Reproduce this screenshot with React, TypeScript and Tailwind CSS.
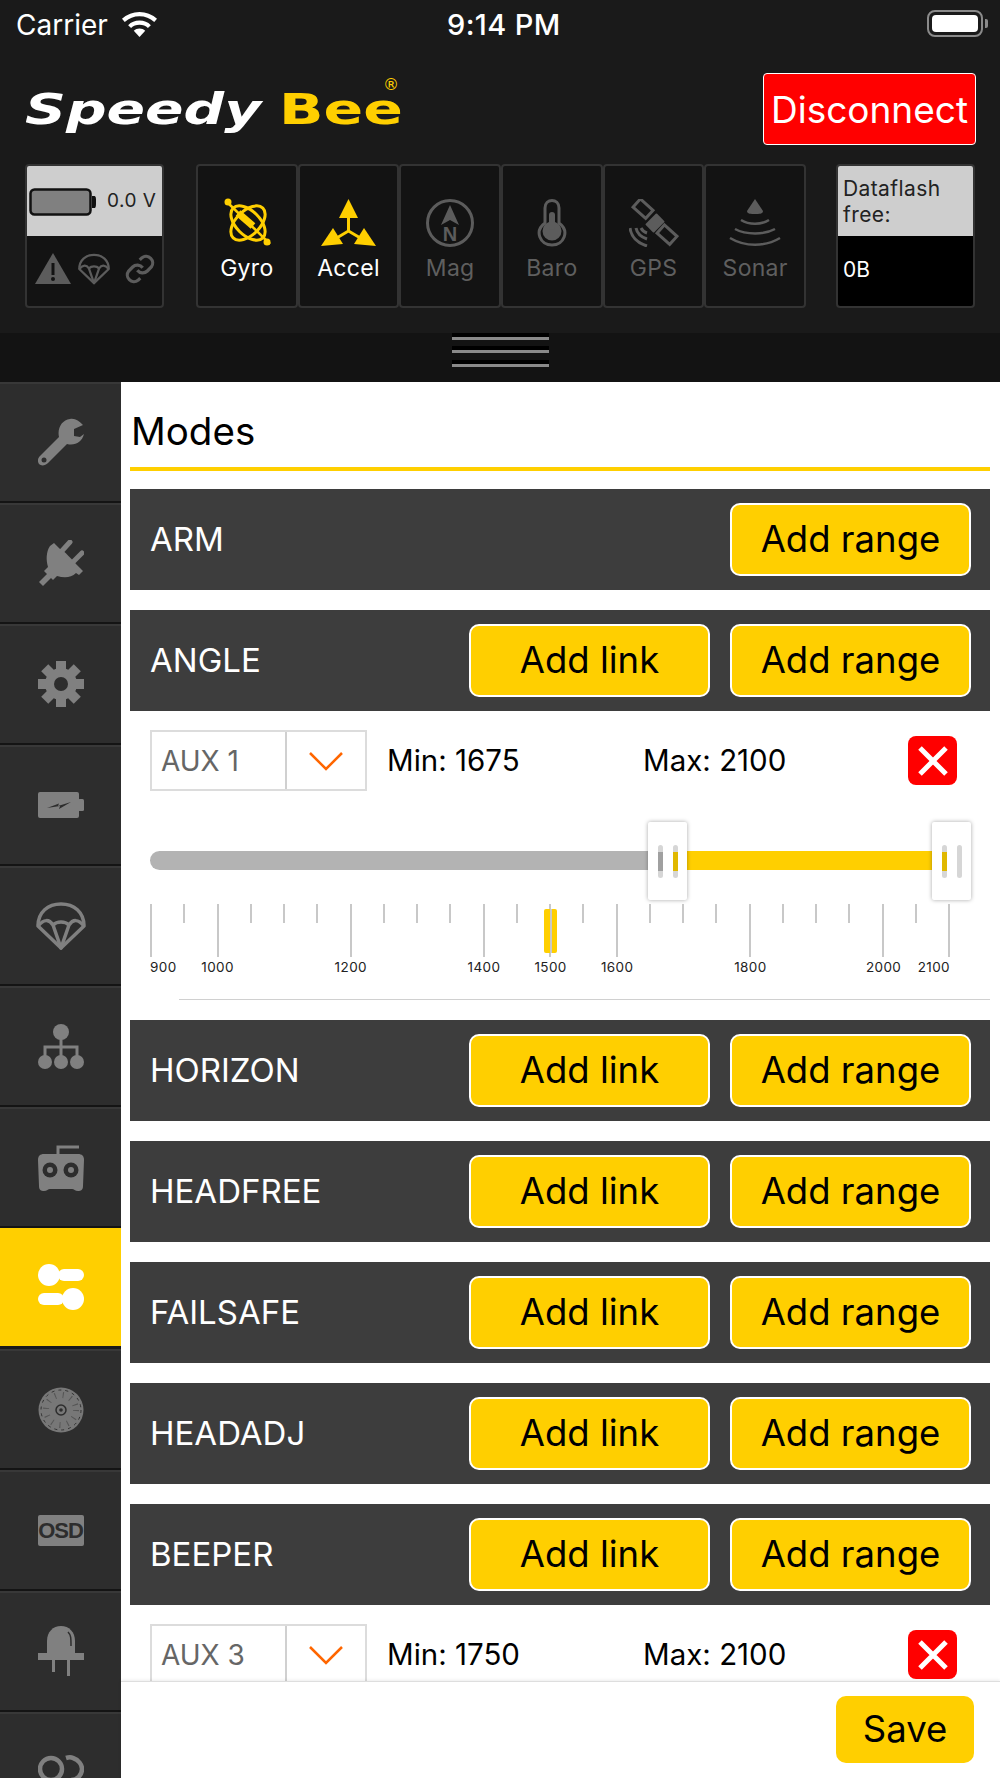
import React from 'react';

const GRAY = '#808080';
const DIM = '#5c5c5c';
const YELLOW = '#ffcf00';

// ===== Sidebar icons =====
const WrenchIcon = () => (
    <svg width="46" height="48" viewBox="0 0 46 48">
        <path d="M45 7 L36 11 L36 18 L42 19 L46 16 C44 24 37 28 29 26 L10 45 C7 48 3 48 1 46 C-1 43 0 40 2 38 L21 19 C19 10 24 2 32 1 C37 0 41 3 45 7 Z" fill={GRAY} />
        <circle cx="6" cy="42" r="2.5" fill="#2d2d2d" />
    </svg>
);

const PlugIcon = () => (
    <svg width="46" height="46" viewBox="0 0 46 46">
        <path d="M12 6 L16 3 L22 9 C27 11 33 19 42 28 L45 31 L41 35 L38 33 C33 38 26 38 19 36 L15 40 L13 38 L5 46 L1 42 L9 34 L6 31 L10 27 C8 20 8 12 12 6 Z" fill={GRAY} />
        <path d="M22 13 L32 2 M33 24 L44 13" stroke={GRAY} strokeWidth="5" strokeLinecap="round" />
    </svg>
);

const GearIcon = () => (
    <svg width="46" height="46" viewBox="0 0 46 46">
        <g fill={GRAY}>
            <rect x="18" y="0" width="10" height="46" />
            <rect x="18" y="0" width="10" height="46" transform="rotate(45 23 23)" />
            <rect x="18" y="0" width="10" height="46" transform="rotate(90 23 23)" />
            <rect x="18" y="0" width="10" height="46" transform="rotate(135 23 23)" />
            <circle cx="23" cy="23" r="16" />
        </g>
        <circle cx="23" cy="23" r="7" fill="#2d2d2d" />
    </svg>
);

const BatteryIcon = () => (
    <svg width="46" height="26" viewBox="0 0 46 26">
        <rect x="0" y="0" width="41" height="26" rx="2" fill={GRAY} />
        <rect x="40" y="7" width="6" height="12" rx="1.5" fill={GRAY} />
        <path d="M9 16 L21 11.5 L20 14 L33 10 L21 17 L22 14 Z" fill="#2d2d2d" />
    </svg>
);

const ParachuteIcon = ({ color = GRAY, size = 50 }: { color?: string; size?: number }) => (
    <svg width={size} height={size} viewBox="0 0 50 50">
        <g fill="none" stroke={color} strokeWidth="3.5" strokeLinejoin="round">
            <path d="M2 25 C2 11 12 3 25 3 C38 3 48 11 48 25 L25 47 Z" />
            <path d="M2 25 C8 18 13 18 17 24 L25 47 L33 24 C37 18 42 18 48 25" />
            <path d="M17 24 C21 20 29 20 33 24" />
        </g>
    </svg>
);

const TreeIcon = () => (
    <svg width="46" height="46" viewBox="0 0 46 46">
        <g fill={GRAY}>
            <circle cx="23" cy="8" r="8" />
            <circle cx="7" cy="38" r="7" />
            <circle cx="23" cy="38" r="7" />
            <circle cx="39" cy="38" r="7" />
        </g>
        <path d="M23 14 V34 M7 34 V23 H39 V34" fill="none" stroke={GRAY} strokeWidth="3" />
    </svg>
);

const RadioIcon = () => (
    <svg width="46" height="48" viewBox="0 0 46 48">
        <path d="M20 11 V3 H41" fill="none" stroke={GRAY} strokeWidth="3" />
        <path d="M6 10 H40 C44 10 46 12 46 16 L45 42 C45 46 43 47 40 47 C37 47 36 45 34 45 H12 C10 45 9 47 6 47 C3 47 1 46 1 42 L0 16 C0 12 2 10 6 10 Z" fill={GRAY} />
        <circle cx="12" cy="26" r="7.5" fill="#2d2d2d" />
        <circle cx="12" cy="26" r="3" fill={GRAY} />
        <circle cx="33" cy="26" r="7.5" fill="#2d2d2d" />
        <circle cx="33" cy="26" r="3" fill={GRAY} />
    </svg>
);

const TogglesIcon = () => (
    <svg width="46" height="46" viewBox="0 0 46 46">
        <g fill="#fff">
            <rect x="20" y="5" width="26" height="12" rx="6" />
            <circle cx="11" cy="11" r="11" />
            <rect x="0" y="29" width="26" height="12" rx="6" />
            <circle cx="35" cy="35" r="11" />
        </g>
    </svg>
);

const WheelIcon = () => (
    <svg width="46" height="46" viewBox="0 0 46 46">
        <circle cx="23" cy="23" r="22.5" fill="#777" />
        <circle cx="23" cy="23" r="20" fill="none" stroke="#333" strokeWidth="1" strokeDasharray="3 4" />
        <circle cx="23" cy="23" r="15" fill="none" stroke="#555" strokeWidth="6" strokeDasharray="1 7" />
        <circle cx="23" cy="23" r="5" fill="none" stroke="#2d2d2d" strokeWidth="1.5" />
        <circle cx="23" cy="23" r="1.8" fill="#2d2d2d" />
    </svg>
);

const LedIcon = () => (
    <svg width="46" height="50" viewBox="0 0 46 50">
        <path d="M9 27 V15 C9 6 15 0 23 0 C31 0 37 6 37 15 V27 Z" fill={GRAY} />
        <path d="M30 6 C33 9 33 12 33 20" fill="none" stroke="#2d2d2d" strokeWidth="1.5" />
        <rect x="0" y="27" width="46" height="7" fill={GRAY} />
        <rect x="14" y="34" width="3" height="12" fill={GRAY} />
        <rect x="29" y="34" width="3" height="16" fill={GRAY} />
    </svg>
);

const LoopIcon = () => (
    <svg width="46" height="50" viewBox="0 0 46 50">
        <circle cx="13" cy="22" r="11" fill="none" stroke={GRAY} strokeWidth="4.5" />
        <path d="M28 11 C31 10 33 10 35 11 C41 13 44 18 44 22 C44 28 39 33 33 33" fill="none" stroke={GRAY} strokeWidth="4.5" />
    </svg>
);

const sideItems = [
    <WrenchIcon />,
    <PlugIcon />,
    <GearIcon />,
    <BatteryIcon />,
    <ParachuteIcon />,
    <TreeIcon />,
    <RadioIcon />,
    <TogglesIcon />,
    <WheelIcon />,
    <div className="w-[46px] h-[31px] bg-[#808080] rounded-[2px] flex items-center justify-center text-[22px] font-bold text-[#2d2d2d] font-['Liberation_Sans',sans-serif] tracking-[-1px]">OSD</div>,
    <LedIcon />,
    <LoopIcon />,
];

// ===== Sensor icons =====
const GyroIcon = () => (
    <svg width="50" height="50" viewBox="0 0 50 50" className="ml-[4px]">
        <g fill="none" stroke={YELLOW} strokeWidth="3">
            <ellipse cx="24" cy="25" rx="21" ry="12" transform="rotate(45 24 25)" />
            <ellipse cx="24" cy="25" rx="21" ry="12" transform="rotate(-45 24 25)" />
            <path d="M3 4 L46 46" strokeWidth="2.5" />
            <path d="M14 15 L29 28" strokeWidth="7" />
        </g>
        <circle cx="4" cy="4" r="3.5" fill={YELLOW} />
        <circle cx="43" cy="44" r="3.5" fill={YELLOW} />
    </svg>
);

const AccelIcon = () => (
    <svg width="56" height="48" viewBox="0 0 56 48">
        <g fill={YELLOW}>
            <path d="M27.5 0 L37 19 L18 19 Z" />
            <path d="M0 47 L12 29 L22 45 Z" />
            <path d="M55 47 L43 29 L33 45 Z" />
        </g>
        <path d="M27.5 18 V32 L14 40 M27.5 32 L41 40" fill="none" stroke={YELLOW} strokeWidth="3" />
    </svg>
);

const MagIcon = () => (
    <svg width="48" height="48" viewBox="0 0 48 48">
        <circle cx="24" cy="24" r="22.5" fill="none" stroke={DIM} strokeWidth="3" />
        <path d="M24 6 L33 26 L24 21 L15 26 Z" fill={DIM} />
        <text x="24" y="42" textAnchor="middle" fontSize="20" fontWeight="700" fill={DIM} fontFamily="Liberation Sans, sans-serif">N</text>
    </svg>
);

const BaroIcon = () => (
    <svg width="32" height="48" viewBox="0 0 32 48">
        <path d="M9 24 V9 C9 -1 23 -1 23 9 V24 C34 32 28 46 16 46 C4 46 -2 32 9 24 Z" fill="none" stroke={DIM} strokeWidth="3" />
        <circle cx="16" cy="32" r="9.5" fill={DIM} />
        <rect x="13" y="13" width="6" height="18" rx="3" fill={DIM} />
    </svg>
);

const GpsIcon = () => (
    <svg width="50" height="48" viewBox="0 0 50 48">
        <g fill="none" stroke={DIM} strokeWidth="3">
            <rect x="6" y="4" width="17" height="11" transform="rotate(42 14 9)" />
            <rect x="30" y="30" width="17" height="11" transform="rotate(42 38 35)" />
            <path d="M1 29 C2 37 8 44 18 47" />
            <path d="M7 29 C8 34 12 38 18 40" />
            <path d="M12 29 C13 31 15 33 18 34" />
        </g>
        <rect x="18" y="18" width="16" height="12" fill={DIM} transform="rotate(-45 26 24)" rx="1" />
    </svg>
);

const SonarIcon = () => (
    <svg width="52" height="48" viewBox="0 0 52 48">
        <path d="M26 0 L34 12 C34 15 30 15 26 15 C22 15 18 15 18 12 Z" fill={DIM} />
        <g fill="none" stroke={DIM} strokeWidth="2.5">
            <path d="M12 21 C20 26 32 26 40 21" />
            <path d="M6 30 C17 36 35 36 46 30" />
            <path d="M1 39 C16 48 36 48 51 39" />
        </g>
    </svg>
);

const sensors = [
    { label: 'Gyro', icon: <GyroIcon />, on: true },
    { label: 'Accel', icon: <AccelIcon />, on: true },
    { label: 'Mag', icon: <MagIcon />, on: false },
    { label: 'Baro', icon: <BaroIcon />, on: false },
    { label: 'GPS', icon: <GpsIcon />, on: false },
    { label: 'Sonar', icon: <SonarIcon />, on: false },
];

// ===== Header =====
const StatusBar = () => (
    <div className="h-[50px] flex items-center relative text-white">
        <span className="ml-[16px] text-[28px]">Carrier</span>
        <svg className="ml-[13px] mb-[3px]" width="37" height="26" viewBox="0 0 35 25">
            <g fill="none" stroke="#fff" strokeWidth="4">
                <path d="M2 9 C11 1 24 1 33 9" />
                <path d="M8 15 C13 10 22 10 27 15" />
            </g>
            <path d="M12 19 C15 16 20 16 23 19 L17.5 25 Z" fill="#fff" />
        </svg>
        <span className="absolute left-[447px] text-[29px] font-medium tracking-[0.4px]">9:14 PM</span>
        <div className="ml-auto mr-[12px] flex items-center mb-[3px]">
            <div className="w-[56px] h-[27px] rounded-[8px] border-2 border-[#8a8a8a] p-[3px]">
                <div className="w-full h-full rounded-[4px] bg-white" />
            </div>
            <div className="w-[3px] h-[9px] bg-[#8a8a8a] rounded-r-[2px] ml-[2px]" />
        </div>
    </div>
);

const Logo = () => (
    <div className="flex items-center h-[97px] ml-[25px] relative font-['DejaVu_Sans',sans-serif] font-bold italic text-[43px] leading-none">
        <span className="text-white inline-block origin-left scale-x-[1.32] w-[254px]">Speedy</span>
        <span className="text-[#ffcf00] inline-block origin-left scale-x-[1.36] not-italic w-[120px]">Bee</span>
        <span className="absolute left-[358px] top-[20px] leading-[8px] text-[#ffcf00] text-[16px] not-italic font-normal">®</span>
    </div>
);

const Header = () => (
    <div className="h-[382px] bg-[#1a1a1a] shrink-0 flex flex-col">
        <StatusBar />
        <div className="flex items-center justify-between pr-[24px] h-[114px] pt-[4px]">
            <Logo />
            <button className="w-[213px] h-[72px] bg-[#ff0000] border border-white rounded-[4px] text-white text-[37px] leading-none">Disconnect</button>
        </div>
        <div className="flex h-[144px] ml-[25px]">
            <div className="w-[139px] border-2 border-[#333] rounded-[4px] bg-[#131313] overflow-hidden flex flex-col">
                <div className="h-[70px] bg-[#cecece] flex items-center pl-[2px] gap-[9px] text-[19px] text-[#222] tracking-[0.5px]">
                    <svg width="69" height="28" viewBox="0 0 69 28" className="mt-[1px]">
                        <rect x="1.5" y="1.5" width="60" height="25" rx="4" fill="#808080" stroke="#111" strokeWidth="2.5" />
                        <path d="M63 8 H65 C67 8 67 10 67 14 C67 18 67 20 65 20 H63 Z" fill="#111" />
                    </svg>
                    <span>0.0 V</span>
                </div>
                <div className="flex-1 flex items-center pl-[8px] gap-[7px] pb-[5px]">
                    <svg width="36" height="32" viewBox="0 0 36 32">
                        <path d="M18 0 L36 31 H0 Z" fill={DIM} />
                        <rect x="16.5" y="10" width="3" height="12" fill="#131313" />
                        <circle cx="18" cy="26" r="2" fill="#131313" />
                    </svg>
                    <ParachuteIcon color={DIM} size={32} />
                    <svg className="ml-[7px]" width="32" height="32" viewBox="0 0 24 24" fill="none" stroke={DIM} strokeWidth="2.4">
                        <path d="M10 13a5 5 0 0 0 7.5.5l3-3a5 5 0 0 0-7-7l-1.7 1.7" />
                        <path d="M14 11a5 5 0 0 0-7.5-.5l-3 3a5 5 0 0 0 7 7l1.7-1.7" />
                    </svg>
                </div>
            </div>
            <div className="flex ml-[32px] w-[610px]">
                {sensors.map((s) => (
                    <div key={s.label} className="flex-1 border-2 border-[#333] rounded-[4px] bg-[#131313] flex flex-col items-center pt-[32px]">
                        <div className="h-[50px] flex items-center justify-center">{s.icon}</div>
                        <span className={`text-[23px] mt-[6px] tracking-[0.3px] leading-[28px] ${s.on ? 'text-white' : 'text-[#5f5f5f]'}`}>{s.label}</span>
                    </div>
                ))}
            </div>
            <div className="w-[139px] ml-[30px] border-2 border-[#333] rounded-[4px] bg-black overflow-hidden flex flex-col">
                <div className="h-[70px] bg-[#cecece] px-[5px] pt-[10px] text-[21px] leading-[26px] text-[#222] tracking-[0.4px]">Dataflash free:</div>
                <div className="flex-1 flex items-center px-[5px] text-[21px] text-white pb-[2px]">0B</div>
            </div>
        </div>
        <div className="flex-1 mt-[25px] bg-[#131313] flex flex-col items-center">
            {[0, 1, 2].map((i) => (
                <div key={i} className="w-[97px] h-[13.3px]">
                    <div className="h-[4px] bg-black" />
                    <div className="h-[3px] bg-[#8a8a8a]" />
                </div>
            ))}
        </div>
    </div>
);

// ===== Modes =====
const YellowButton = ({ children, width = 'w-[241px]' }: { children: React.ReactNode; width?: string }) => (
    <button className={`${width} h-[73px] bg-[#ffcf00] border-2 border-white rounded-[10px] text-[36.5px] text-black leading-none`}>{children}</button>
);

const ModeRow = ({ name, link = true }: { name: string; link?: boolean }) => (
    <div className="h-[101px] bg-[#3d3d3d] flex items-center pl-[20px] pr-[19px] gap-[20px] shrink-0">
        <span className="text-white text-[33px] mr-auto">{name}</span>
        {link && <YellowButton>Add link</YellowButton>}
        <YellowButton>Add range</YellowButton>
    </div>
);

const RangeHead = ({ aux, min, max }: { aux: string; min: number; max: number }) => (
    <div className="flex items-center h-[61px]">
        <div className="flex w-[217px] h-[61px] border-2 border-[#dcdcdc]">
            <div className="w-[135px] border-r-2 border-[#d0d0d0] flex items-center pl-[9px] text-[28px] text-[#666]">{aux}</div>
            <div className="flex-1 flex items-center justify-center">
                <svg width="36" height="20" viewBox="0 0 36 20" fill="none" stroke="#ff6600" strokeWidth="2.5">
                    <path d="M2 2 L18 18 L34 2" />
                </svg>
            </div>
        </div>
        <span className="ml-[20px] w-[256px] text-[29.5px] text-black">Min: {min}</span>
        <span className="w-[265px] text-[29.5px] text-black">Max: {max}</span>
        <button className="w-[49px] h-[49px] bg-[#ff0000] rounded-[8px] flex items-center justify-center">
            <svg width="30" height="30" viewBox="0 0 30 30" stroke="#fff" strokeWidth="5">
                <path d="M2 2 L28 28 M28 2 L2 28" />
            </svg>
        </button>
    </div>
);

const Grip = ({ mid }: { mid: string }) => (
    <div className="w-[5px] h-[33px] rounded-[3px] bg-[#d6d6d6] flex flex-col justify-center">
        <div className={`h-[19px] ${mid}`} />
    </div>
);

const Handle = ({ left, first, second }: { left: string; first: string; second: string }) => (
    <div className={`absolute top-[-29px] ${left} w-[39px] h-[78px] bg-white rounded-[2px] shadow-[0_0_4px_rgba(0,0,0,0.35)] flex items-center pl-[10px] gap-[10px]`}>
        <Grip mid={first} />
        <Grip mid={second} />
    </div>
);

const tickValues = Array.from({ length: 25 }, (_, i) => 900 + i * 50);
const majorTicks = [900, 1000, 1200, 1400, 1500, 1600, 1800, 2000, 2100];

const Slider = () => (
    <div className="relative w-[800px] mt-[60px]">
        <div className="h-[19px] bg-[#b3b3b3] rounded-l-[10px] relative">
            <div className="absolute left-[518px] right-[5px] top-0 bottom-0 bg-[#ffcf00]" />
            <Handle left="left-[498px]" first="bg-[#a0a0a0]" second="bg-[#e0b800]" />
            <Handle left="left-[782px]" first="bg-[#e0b800]" second="bg-[#d6d6d6]" />
        </div>
        <div className="relative h-[96px] mt-[34px]">
            <div className="flex justify-between items-start">
                {tickValues.map((v) => (
                    <div key={v} className={`w-[2px] bg-[#c8c8c8] ${majorTicks.includes(v) ? 'h-[53px]' : 'h-[19px]'}`} />
                ))}
            </div>
            <div className="absolute left-[394px] top-[5px] w-[13px] h-[44px] bg-[#ffcf00] rounded-[2px] flex justify-center">
                <div className="w-[2px] h-full bg-[#c8c8c8]" />
            </div>
            <span className="absolute left-0 top-[53px] text-[13.5px] text-[#222] tracking-[0.4px]">900</span>
            {majorTicks.slice(1, -1).map((v) => (
                <span key={v} className="absolute top-[53px] w-[60px] ml-[-30px] text-center text-[13.5px] text-[#222] tracking-[0.4px]" style={{ left: ((v - 900) / 50) * 33.3 + 1 }}>{v}</span>
            ))}
            <span className="absolute right-0 top-[53px] text-[13.5px] text-[#222] tracking-[0.4px]">2100</span>
        </div>
    </div>
);

const ModesPage = () => (
    <div className="flex-1 flex flex-col min-w-0 bg-white">
        <div className="flex-1 overflow-hidden pl-[9px] pr-[10px] min-h-0">
            <div className="h-[89px] border-b-4 border-[#ffcf00] flex items-center pl-[1px] pt-[14px] text-[38.5px] text-black">Modes</div>
            <div className="flex flex-col mt-[18px]">
                <div className="mb-[20px]"><ModeRow name="ARM" link={false} /></div>
                <ModeRow name="ANGLE" />
                <div className="h-[289px] pt-[19px] pl-[20px] mb-[20px] relative shrink-0">
                    <RangeHead aux="AUX 1" min={1675} max={2100} />
                    <Slider />
                    <div className="absolute left-[49px] right-0 bottom-0 h-[1px] bg-[#d0d0d0]" />
                </div>
                <div className="mb-[20px]"><ModeRow name="HORIZON" /></div>
                <div className="mb-[20px]"><ModeRow name="HEADFREE" /></div>
                <div className="mb-[20px]"><ModeRow name="FAILSAFE" /></div>
                <div className="mb-[20px]"><ModeRow name="HEADADJ" /></div>
                <ModeRow name="BEEPER" />
                <div className="pt-[19px] pl-[20px]">
                    <RangeHead aux="AUX 3" min={1750} max={2100} />
                </div>
            </div>
        </div>
        <div className="h-[97px] shrink-0 border-t border-[#dedede] shadow-[0_-1px_3px_rgba(0,0,0,0.08)] bg-white flex justify-end items-start pt-[14px] pr-[26px] relative">
            <button className="w-[138px] h-[67px] bg-[#ffcf00] rounded-[10px] text-[36.5px] text-black leading-none">Save</button>
        </div>
    </div>
);

const Sidebar = () => (
    <div className="w-[121px] shrink-0 flex flex-col overflow-hidden bg-[#2d2d2d]">
        {sideItems.map((icon, i) => (
            <div
                key={i}
                className={`h-[120.9px] shrink-0 flex items-center justify-center ${i === 7 ? 'bg-[#ffcf00] border-b-[3px] border-b-[#1a1a1a]' : 'bg-[#2d2d2d] border-t-2 border-b-2 border-t-[#383838] border-b-[#141414]'}`}
            >
                {icon}
            </div>
        ))}
    </div>
);

export default function App() {
    return (
        <div className="w-[1000px] h-[1778px] overflow-hidden flex flex-col font-['Inter',sans-serif]">
            <Header />
            <div className="flex-1 flex min-h-0">
                <Sidebar />
                <ModesPage />
            </div>
        </div>
    );
}
